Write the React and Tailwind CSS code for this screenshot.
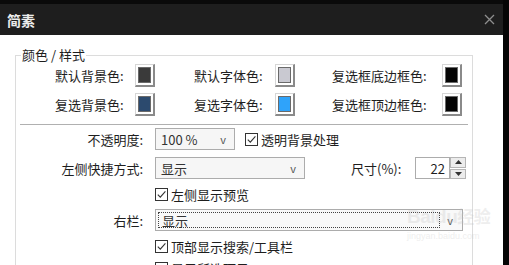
function Check({ checked = true }) {
  return (
    <span className="w-[13px] h-[13px] border border-[#333] bg-white flex items-center justify-center shrink-0">
      {checked && (
        <svg width="11" height="11" viewBox="0 0 11 11">
          <path d="M1.8 5.6 L4.3 8.2 L9.4 2.4" fill="none" stroke="#333" strokeWidth="1.1" />
        </svg>
      )}
    </span>
  );
}

function Swatch({ color }) {
  return (
    <span className="w-[20px] h-[23px] bg-white border-t border-l border-[#d6d6d6] border-r-2 border-b-2 border-r-[#8a8a8a] border-b-[#8a8a8a] p-[2px] flex">
      <span className="flex-1 border border-[#6a6a6a]" style={{ backgroundColor: color }} />
    </span>
  );
}

function ColorCell({ label, w, color }) {
  return (
    <div className="flex items-center">
      <span className={`${w} leading-none`}>{label}</span>
      <Swatch color={color} />
    </div>
  );
}

export default function App() {
  return (
    <div className="w-[509px] h-[265px] bg-[#050505] overflow-hidden relative font-['Noto_Sans_CJK_SC','Noto_Sans',sans-serif] text-[13px] text-[#1e1e1e]">
      <div className="flex h-full">
        <div className="w-[503px] flex flex-col">
          <div className="h-[4px] bg-[#0a0a0a]" />
          <div className="h-[31px] bg-[#1e1e1e] flex items-center justify-between pl-[7px] pr-[8px]">
            <span className="text-[#ececec] text-[14px] font-bold leading-none">简素</span>
            <svg width="11" height="11" viewBox="0 0 11 11">
              <path d="M1 1 L10 10 M10 1 L1 10" stroke="#8e8e8e" strokeWidth="1.3" />
            </svg>
          </div>
          <div className="flex-1 bg-white pt-[13px] pl-[15px] overflow-hidden relative">
            <fieldset className="w-[458px] h-[260px] border border-[#dcdcdc]">
              <legend className="ml-[5px] px-[1px] leading-[14px]">颜色 / 样式</legend>
              <div className="pt-[2px] pl-[39px] grid grid-cols-[139px_138px_1fr] gap-y-[6px]">
                <ColorCell label="默认背景色:" w="w-[80px]" color="#3a3a3a" />
                <ColorCell label="默认字体色:" w="w-[81px]" color="#c9c9d1" />
                <ColorCell label="复选框底边框色:" w="w-[110px]" color="#050505" />
                <ColorCell label="复选背景色:" w="w-[80px]" color="#2c4a6e" />
                <ColorCell label="复选字体色:" w="w-[81px]" color="#2fa3fa" />
                <ColorCell label="复选框顶边框色:" w="w-[110px]" color="#050505" />
              </div>
              <div className="mt-[8px] mx-[4px] h-px bg-[#b0b0b0]" />
              <div className="mt-[3px] flex flex-col">
                <div className="h-[22px] flex items-center">
                  <span className="w-[127px] text-right leading-none">不透明度:</span>
                  <div className="ml-[12px] w-[80px] h-[22px] border border-[#acacac] bg-[#f6f6f6] flex items-center justify-between pl-[5px] pr-[8px]">
                    <span className="leading-none text-[#333]">100 %</span>
                    <span className="text-[11px] leading-none text-[#555]">v</span>
                  </div>
                  <span className="ml-[10px]"><Check /></span>
                  <span className="ml-[3px] leading-none">透明背景处理</span>
                </div>
                <div className="mt-[7px] h-[22px] flex items-center">
                  <span className="w-[127px] text-right leading-none">左侧快捷方式:</span>
                  <div className="ml-[12px] w-[150px] h-[22px] border border-[#acacac] bg-[#f6f6f6] flex items-center justify-between pl-[5px] pr-[8px]">
                    <span className="leading-none text-[#333]">显示</span>
                    <span className="text-[11px] leading-none text-[#555]">v</span>
                  </div>
                  <span className="ml-[46px] w-[64px] leading-none">尺寸(%):</span>
                  <div className="w-[51px] h-[22px] flex">
                    <div className="flex-1 border border-[#acacac] flex items-center justify-end pr-[4px] leading-none">22</div>
                    <div className="w-[16px] flex flex-col gap-px">
                      <div className="flex-1 border border-[#b5b5b5] bg-[#ececec] flex items-center justify-center">
                        <svg width="7" height="4" viewBox="0 0 7 4"><path d="M0 4 L3.5 0 L7 4 Z" fill="#333" /></svg>
                      </div>
                      <div className="flex-1 border border-[#b5b5b5] bg-[#ececec] flex items-center justify-center">
                        <svg width="7" height="4" viewBox="0 0 7 4"><path d="M0 0 L3.5 4 L7 0 Z" fill="#333" /></svg>
                      </div>
                    </div>
                  </div>
                </div>
                <div className="mt-[4px] h-[22px] flex items-center pl-[139px] gap-[3px]">
                  <Check />
                  <span className="leading-none">左侧显示预览</span>
                </div>
                <div className="mt-[4px] h-[22px] flex items-center">
                  <span className="w-[127px] text-right leading-none">右栏:</span>
                  <div className="ml-[12px] w-[308px] h-[22px] border border-[#acacac] bg-[#f9f9f9] flex p-[2px]">
                    <div className="flex-1 border border-dotted border-[#444] flex items-center pl-[3px]">
                      <span className="leading-none text-[#333]">显示</span>
                    </div>
                    <div className="w-[20px] flex items-center justify-center">
                      <span className="text-[11px] leading-none text-[#555]">v</span>
                    </div>
                  </div>
                </div>
                <div className="mt-[4px] h-[22px] flex items-center pl-[139px] gap-[3px]">
                  <Check />
                  <span className="leading-none">顶部显示搜索/工具栏</span>
                </div>
                <div className="h-[22px] flex items-center pl-[139px] gap-[3px]">
                  <Check checked={false} />
                  <span className="leading-none">显示所选项目</span>
                </div>
              </div>
            </fieldset>
            <div className="absolute left-[407px] top-[172px] pointer-events-none opacity-25 text-[#bdbdbd] font-['Liberation_Sans',sans-serif]">
              <div className="text-[19px] font-bold leading-none tracking-[-0.5px]">Baidu<span className="font-['Noto_Sans_CJK_SC',sans-serif] text-[17px]">经验</span></div>
              <div className="text-[9px] leading-none mt-[6px]">jingyan.baidu.com</div>
            </div>
          </div>
        </div>
        <div className="flex-1 bg-[#050505]" />
      </div>
    </div>
  );
}
